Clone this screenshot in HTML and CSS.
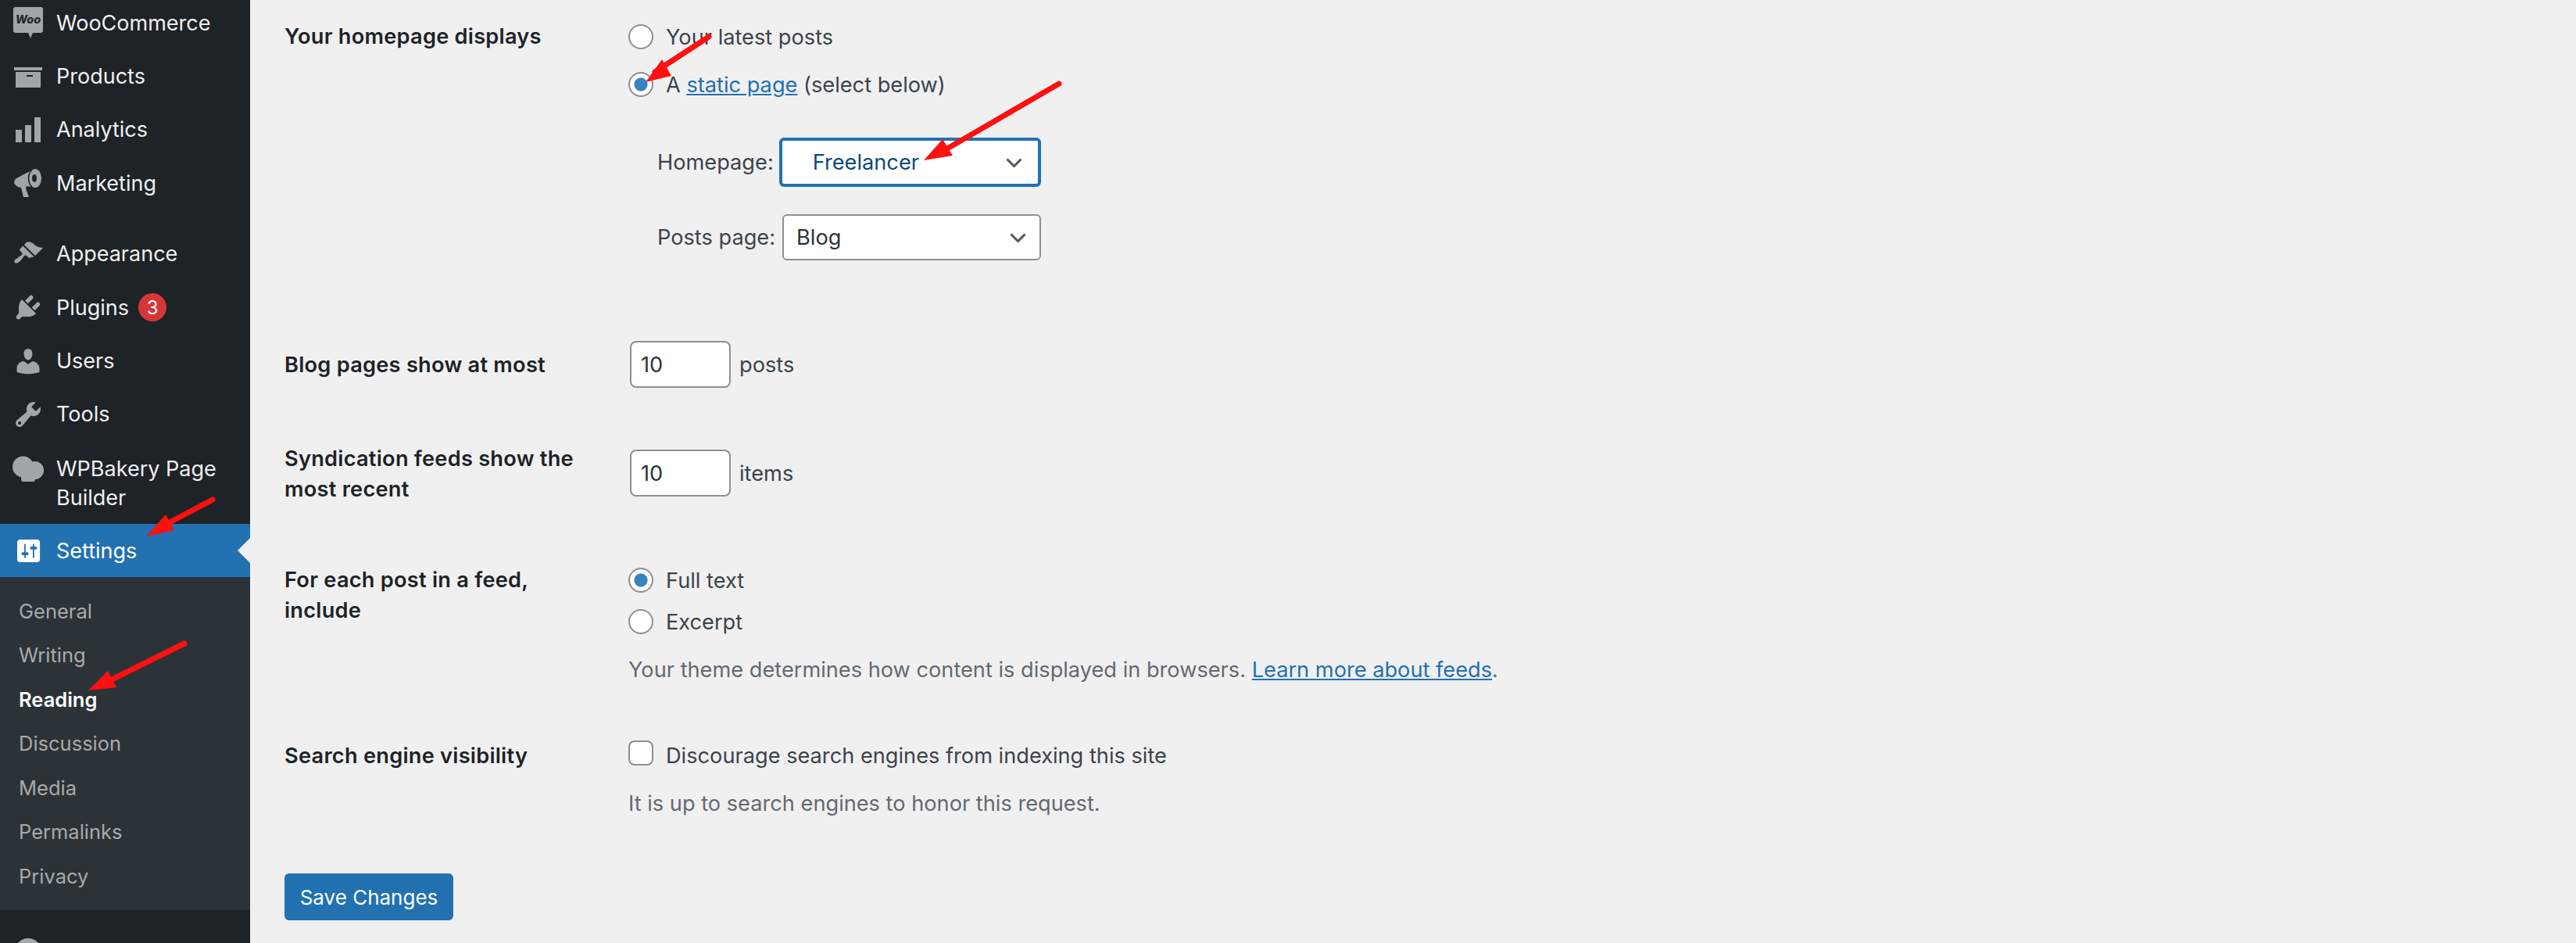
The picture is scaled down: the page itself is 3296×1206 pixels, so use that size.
FILE: index.html
```html
<!DOCTYPE html>
<html lang="en">
<head>
<meta charset="utf-8">
<title>Reading Settings</title>
<link rel="stylesheet" href="styles.css">
</head>
<body>
<div class="app">
  <nav class="sidebar">
    <ul class="menu">
      <li class="item">
        <svg class="icon" viewBox="0 0 40 40"><path class="fill" d="M4 0h32a3 3 0 0 1 3 3v27a3 3 0 0 1-3 3H26l-3 7-3-7H4a3 3 0 0 1-3-3V3a3 3 0 0 1 3-3z"/><text class="woo" x="20" y="21" text-anchor="middle">Woo</text></svg>
        <span>WooCommerce</span>
      </li>
      <li class="item">
        <svg class="icon" viewBox="0 0 40 40"><path class="fill" d="M2 8h36v4H2zM4 14h32v20H4z"/><path class="hole" d="M18 18h8v2h-8z"/></svg>
        <span>Products</span>
      </li>
      <li class="item">
        <svg class="icon" viewBox="0 0 40 40"><path class="fill" d="M4 20h8v16H4zM16 14h8v22h-8zM28 4h8v32h-8z"/></svg>
        <span>Analytics</span>
      </li>
      <li class="item sep-after">
        <svg class="icon" viewBox="0 0 40 40"><path class="fill" d="M5 14 24 4q-3 5-3 11t3 10L18 24l-1 3 4 11h-7l-3-12-4-1q-5-3-5-6t3-5z"/><ellipse class="fill" cx="29" cy="14" rx="8" ry="12"/><ellipse class="hole" cx="28" cy="14" rx="3" ry="5"/><path class="hole-line" d="M24.500 3.500q-4 4-4 10.500t4 11"/></svg>
        <span>Marketing</span>
      </li>
      <li class="item">
        <svg class="icon" viewBox="0 0 20 20"><path class="fill" d="M14.48 11.06L7.41 3.99l1.5-1.5c.5-.56 2.3-.47 3.51.32 1.21.8 1.43 1.28 2.91 2.1 1.18.64 2.45 1.26 4.45.85zm-.71.71L6.7 4.7 4.930 6.470c-.39.39-.39 1.02 0 1.41l1.06 1.06c.39.39.39 1.03 0 1.42-.6.6-1.43 1.11-2.21 1.69-.35.26-.7.53-1.01.84C1.43 13.23.76 14.75 1.500 15.500c.75.75 2.27.08 3.61-1.27.31-.31.58-.66.84-1.01.58-.78 1.09-1.61 1.69-2.21.39-.39 1.02-.39 1.41 0l1.06 1.06c.39.39 1.02.39 1.41 0z"/></svg>
        <span>Appearance</span>
      </li>
      <li class="item">
        <svg class="icon" viewBox="0 0 20 20"><path class="fill" d="M13.11 4.360L9.870 7.600 8 5.730l3.240-3.240c.35-.34 1.050-.2 1.560.32.52.51.66 1.210.31 1.550zm-8 1.770l.91-1.120 9.010 9.010-1.190.84c-.71.71-2.630 1.160-3.820 1.160H6.140L4.900 17.260c-.59.59-1.540.59-2.120 0-.59-.58-.59-1.530 0-2.120l1.240-1.240v-3.880c0-1.130.4-3.190 1.090-3.890zm7.260 3.970l3.240-3.240c.34-.35 1.040-.21 1.550.31.52.51.66 1.210.31 1.550l-3.240 3.250z"/></svg>
        <span>Plugins</span>
        <b class="badge">3</b>
      </li>
      <li class="item">
        <svg class="icon" viewBox="0 0 20 20"><path class="fill" d="M10 9.250c-2.270 0-2.730-3.440-2.730-3.440C7 4.020 7.820 2 9.970 2c2.160 0 2.980 2.020 2.710 3.810 0 0-.41 3.440-2.680 3.440zm0 2.570L12.720 10c2.390 0 4.520 2.330 4.520 4.530v2.490s-3.650 1.130-7.240 1.130c-3.650 0-7.240-1.130-7.240-1.130v-2.490c0-2.250 1.940-4.480 4.470-4.480z"/></svg>
        <span>Users</span>
      </li>
      <li class="item">
        <svg class="icon" viewBox="0 0 20 20"><path class="fill" d="M16.680 9.770c-1.340 1.340-3.300 1.670-4.950.99l-5.410 6.520c-.99.99-2.590.99-3.580 0s-.99-2.590 0-3.570l6.520-5.420c-.68-1.650-.35-3.610.99-4.950 1.280-1.280 3.120-1.620 4.720-1.060l-2.890 2.890 2.820 2.820 2.860-2.870c.53 1.580.18 3.390-1.080 4.670zM3.810 16.210c.4.39 1.040.39 1.430 0 .4-.4.4-1.040 0-1.430-.39-.4-1.030-.4-1.430 0-.39.39-.39 1.030 0 1.430z"/></svg>
        <span>Tools</span>
      </li>
      <li class="item item-tall">
        <svg class="icon" viewBox="0 0 40 40"><circle class="fill" cx="13.500" cy="18" r="13.500"/><circle class="fill" cx="28.500" cy="22.500" r="11.500"/><rect class="fill" x="11" y="24" width="18" height="13" rx="3"/></svg>
        <span>WPBakery Page Builder</span>
      </li>
      <li class="item item-active">
        <svg class="icon" viewBox="-1.300 -1.300 22 22"><path class="white" d="M18 16V4c0-1.100-.9-2-2-2H4c-1.100 0-2 .9-2 2v12c0 1.100.9 2 2 2h12c1.100 0 2-.9 2-2zM8 11h1c.55 0 1 .45 1 1s-.45 1-1 1H8v1.500c0 .28-.22.5-.5.5s-.5-.22-.5-.5V13H6c-.55 0-1-.45-1-1s.45-1 1-1h1V5.500c0-.28.22-.5.5-.5s.5.22.5.5V11zm5-2h-1c-.55 0-1-.45-1-1s.45-1 1-1h1V5.500c0-.28.22-.5.5-.5s.5.22.5.5V7h1c.55 0 1 .45 1 1s-.45 1-1 1h-1v5.500c0 .28-.22.5-.5.5s-.5-.22-.5-.5V9z"/></svg>
        <span>Settings</span>
        <i class="notch"></i>
      </li>
    </ul>
    <ul class="submenu">
      <li>General</li>
      <li>Writing</li>
      <li class="current">Reading</li>
      <li>Discussion</li>
      <li>Media</li>
      <li>Permalinks</li>
      <li>Privacy</li>
    </ul>
    <div class="collapse"><i class="collapse-dot"></i></div>
  </nav>

  <main class="content">
    <section class="row row-home">
      <div class="label">Your homepage displays</div>
      <div class="field field-home">
        <label class="opt"><input type="radio" name="home"><span>Your latest posts</span></label>
        <label class="opt opt-second"><input type="radio" name="home" checked><span>A <a href="#">static page</a> (select below)</span></label>
        <div class="pick pick-home">
          <span>Homepage:</span>
          <div class="select select-focus"><span>Freelancer</span>
            <svg class="chev" viewBox="0 0 21 12"><path d="M1.500 1.500 10.500 10.500 19.500 1.500"/></svg>
          </div>
        </div>
        <div class="pick pick-posts">
          <span>Posts page:</span>
          <div class="select"><span>Blog</span>
            <svg class="chev" viewBox="0 0 21 12"><path d="M1.500 1.500 10.500 10.500 19.500 1.500"/></svg>
          </div>
        </div>
      </div>
    </section>

    <section class="row row-blog">
      <div class="label">Blog pages show at most</div>
      <div class="field num-line"><input class="num" type="text" value="10"><span>posts</span></div>
    </section>

    <section class="row row-feeds">
      <div class="label">Syndication feeds show the most recent</div>
      <div class="field num-line"><input class="num" type="text" value="10"><span>items</span></div>
    </section>

    <section class="row row-each">
      <div class="label">For each post in a feed, include</div>
      <div class="field field-each">
        <label class="opt"><input type="radio" name="feed" checked><span>Full text</span></label>
        <label class="opt opt-excerpt"><input type="radio" name="feed"><span>Excerpt</span></label>
        <p class="help help-feed">Your theme determines how content is displayed in browsers. <a href="#">Learn more about feeds</a>.</p>
      </div>
    </section>

    <section class="row row-search">
      <div class="label">Search engine visibility</div>
      <div class="field">
        <label class="opt opt-check"><input type="checkbox"><span>Discourage search engines from indexing this site</span></label>
        <p class="help help-search">It is up to search engines to honor this request.</p>
      </div>
    </section>

    <button class="save" type="button">Save Changes</button>
  </main>
</div>

<svg class="arrows" viewBox="0 0 3296 1206">
  <g class="arrow">
    <path d="M907 47 838 92"/><path class="head" d="M826 105 847 76 859 97z"/>
  </g>
  <g class="arrow">
    <path d="M1355 107 1212 190"/><path class="head" d="M1182 205 1206 178 1219 199z"/>
  </g>
  <g class="arrow">
    <path d="M272 639 217 668"/><path class="head" d="M187 686 212 658 223 678z"/>
  </g>
  <g class="arrow">
    <path d="M236 823 143 869"/><path class="head" d="M113 883 138 858 149 879z"/>
  </g>
</svg>
</body>
</html>
```
FILE: styles.css
```css
* { box-sizing: border-box; }
html, body { margin: 0; height: 100%; overflow: hidden; }
body {
  position: relative;
  background: #f0f0f1;
  color: #3c434a;
  font-family: Inter, "Noto Sans", "Liberation Sans", sans-serif;
  font-size: 27.200px;
  line-height: 39px;
}
.app { display: flex; height: 1206px; overflow: hidden; }

/* Sidebar */
.sidebar {
  flex: 0 0 320px;
  background: #1d2327;
  color: #f0f0f1;
  overflow: hidden;
  font-size: 27px;
}
.menu, .submenu { list-style: none; margin: 0; padding: 0; }
.menu { margin-top: -5px; }
.item {
  position: relative;
  display: flex;
  align-items: center;
  height: 68.4px;
  padding-left: 16px;
  gap: 16px;
  line-height: 37px;
}
.sep-after { margin-bottom: 22px; }
.icon { flex: 0 0 40px; width: 40px; height: 40px; }
.fill { fill: #a0a5aa; }
.hole { fill: #1d2327; }
.hole-line { fill: none; stroke: #1d2327; stroke-width: 1.500; }
.white { fill: #fff; }
.woo { fill: #23282d; font-size: 14.500px; font-weight: 800; font-style: italic; }
.badge {
  display: flex;
  align-items: center;
  justify-content: center;
  width: 36px;
  height: 36px;
  margin-left: -4px;
  border-radius: 50%;
  background: #d63638;
  color: #fff;
  font-size: 24px;
  font-weight: 400;
}
.item-tall { align-items: flex-start; height: 106px; padding-top: 15px; }
.item-tall span { width: 232px; padding-top: 2px; }
.item-active { background: #2271b1; color: #fff; height: 68px; }
.notch {
  position: absolute;
  right: 0;
  top: 18px;
  border: 16px solid transparent;
  border-right-color: #f0f0f1;
  border-left-width: 0;
}
.submenu {
  background: #2c3338;
  color: #a7aaad;
  padding: 15px 0 15px 24px;
  font-size: 25.500px;
}
.submenu li { height: 56.500px; display: flex; align-items: center; }
.submenu .current { color: #fff; font-weight: 600; }
.collapse { padding: 36px 0 0 19px; }
.collapse-dot { display: block; width: 34px; height: 34px; border-radius: 50%; background: #a7aaad; }

/* Form */
.content { flex: 1; padding-left: 44px; }
.row { display: grid; grid-template-columns: 440px 1fr; }
.label { color: #1d2327; font-weight: 600; width: 392px; letter-spacing: .25px; }
.field { min-width: 0; }
.row-home { margin-top: 27px; }
.field-home { padding-top: 4px; }
.opt { display: flex; align-items: center; gap: 16px; height: 32px; }
.opt-second { margin-top: 29px; }
.opt-excerpt { margin-top: 21px; }
.opt input {
  appearance: none;
  flex: 0 0 32px;
  width: 32px;
  height: 32px;
  margin: 0;
  background: #fff;
  border: 2px solid #8c8f94;
  border-radius: 50%;
}
.opt input:checked {
  background: radial-gradient(circle, #3582c4 0 8px, #fff 9px);
}
.opt input[type="checkbox"] { border-radius: 8px; }
.opt-check span { padding-top: 6px; }
a { color: #2271b1; text-decoration: underline; }
.pick { display: flex; align-items: center; margin-left: 37px; gap: 9px; }
.pick-home { margin-top: 52px; gap: 7px; }
.pick-posts { margin-top: 35px; }
.select {
  display: flex;
  align-items: center;
  justify-content: space-between;
  background: #fff;
  border: 2px solid #8c8f94;
  border-radius: 6px;
  color: #2c3338;
  height: 59px;
  width: 331px;
  padding: 0 17px 0 16px;
}
.select-focus {
  border: 4px solid #2271b1;
  color: #0a4b78;
  height: 63px;
  width: 335px;
  padding: 0 20px 0 39px;
}
.chev { width: 21px; height: 12px; fill: none; stroke: #50575e; stroke-width: 3; }
.row-blog { margin-top: 103px; align-items: center; }
.row-feeds { margin-top: 71px; }
.num-line { display: flex; align-items: center; gap: 11px; margin-left: 2px; height: 60px; }
.row-feeds .num-line { margin-top: 8px; }
.num {
  width: 129px;
  height: 60px;
  padding: 0 12px;
  border: 2px solid #8c8f94;
  border-radius: 8px;
  background: #fff;
  color: #2c3338;
  font: inherit;
}
.row-each { margin-top: 77px; }
.field-each { padding-top: 4px; }
.help { margin: 0; color: #646970; }
.help-feed { margin-top: 26px; }
.row-search { margin-top: 71px; }
.help-search { margin-top: 29px; }
.save {
  display: block;
  margin-top: 70px;
  width: 216px;
  height: 60px;
  padding: 0;
  border: 0;
  border-radius: 6px;
  background: #2271b1;
  color: #fff;
  font: inherit;
  font-size: 26px;
}

/* Annotation arrows drawn over the screenshot */
.arrows {
  position: absolute;
  left: 0;
  top: 0;
  width: 3296px;
  height: 1206px;
  pointer-events: none;
}
.arrow path { fill: none; stroke: #fe1010; stroke-width: 7; stroke-linecap: round; }
.arrow .head { fill: #fe1010; stroke: none; }
```
